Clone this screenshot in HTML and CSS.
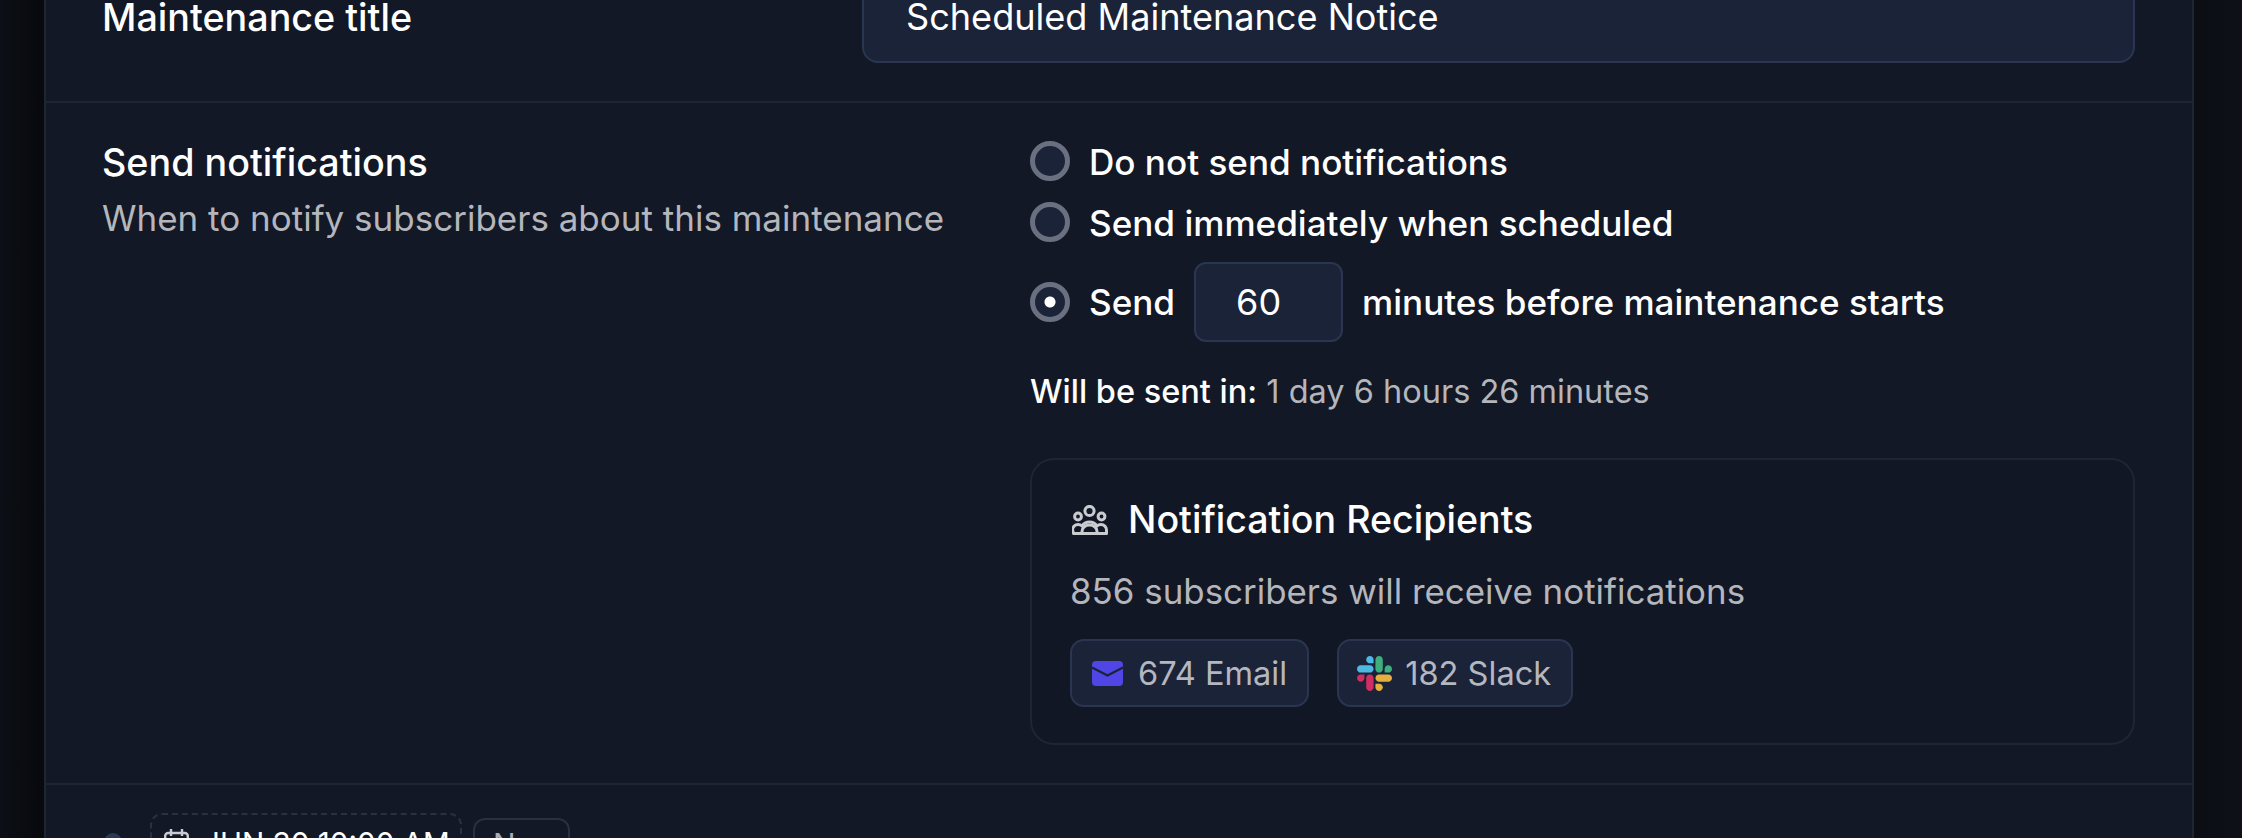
FILE: index.html
```html
<!DOCTYPE html>
<html lang="en">
<head>
  <meta charset="UTF-8" />
  <meta name="viewport" content="width=device-width, initial-scale=1.0"/>
  <title>Scheduled Maintenance</title>
  <link rel="stylesheet" href="styles.css">
</head>
<body>
  <div class="panel">

    <!-- Title row, scrolled partly out of view -->
    <section class="row row-title">
      <label class="row-label" for="title">Maintenance title</label>
      <input class="text-input" id="title" type="text" value="Scheduled Maintenance Notice">
    </section>

    <!-- Notifications row -->
    <section class="row row-notify">
      <div class="notify-intro">
        <h3 class="row-label">Send notifications</h3>
        <p class="row-help">When to notify subscribers about this maintenance</p>
      </div>
      <div>
        <div class="radio-line"><span class="radio"></span>Do not send notifications</div>
        <div class="radio-line"><span class="radio"></span>Send immediately when scheduled</div>
        <div class="radio-line radio-line-input">
          <span class="radio radio-on"></span>Send
          <input class="minutes" type="text" value="60">
          minutes before maintenance starts
        </div>
        <p class="sent-in"><strong>Will be sent in:</strong> 1 day 6 hours 26 minutes</p>

        <div class="recipients">
          <div class="recipients-head">
            <svg class="icon-users" viewBox="0 0 36 30" fill="none" stroke="#c9cbd0" stroke-width="3" stroke-linejoin="round">
              <circle cx="17.500" cy="6" r="4.600"/>
              <circle cx="6" cy="11.500" r="3.400"/>
              <circle cx="29.500" cy="11.500" r="3.400"/>
              <path d="M1.500 28.500h33v-3.500c0-3-2.500-5.500-5.500-5.500-1.500 0-3 .5-4 1.500-1.500-2.500-4.500-4-7.500-4s-6 1.500-7.500 4c-1-1-2.500-1.500-4-1.500-3 0-5.500 2.500-5.500 5.500z"/>
              <path d="M10 28.500v-2c0-4 3.500-6.500 7.500-6.500s7.500 2.500 7.500 6.500v2"/>
            </svg>
            <h4>Notification Recipients</h4>
          </div>
          <p class="recipients-count">856 subscribers will receive notifications</p>
          <div class="chips">
            <span class="chip">
              <svg class="icon-mail" viewBox="0 0 31 25">
                <rect width="31" height="25" rx="4" fill="#4f46e5"/>
                <path d="M0 6.500l15.500 8 15.500-8" fill="none" stroke="#1b2339" stroke-width="2.200"/>
              </svg>
              674 Email
            </span>
            <span class="chip">
              <svg class="icon-slack" viewBox="0 0 122.800 122.800">
                <path d="M25.800 77.600c0 7.100-5.800 12.900-12.900 12.900S0 84.700 0 77.600s5.800-12.900 12.900-12.900h12.900v12.900z" fill="#cf2f60"/>
                <path d="M32.300 77.600c0-7.100 5.800-12.900 12.900-12.900s12.900 5.800 12.900 12.900v32.300c0 7.100-5.800 12.900-12.900 12.900s-12.900-5.800-12.900-12.900V77.600z" fill="#cf2f60"/>
                <path d="M45.200 25.800c-7.100 0-12.900-5.800-12.900-12.900S38.100 0 45.200 0s12.900 5.800 12.900 12.900v12.900H45.200z" fill="#4db9e3"/>
                <path d="M45.200 32.300c7.100 0 12.900 5.800 12.900 12.900s-5.800 12.900-12.900 12.900H12.900C5.800 58.100 0 52.300 0 45.200s5.800-12.900 12.900-12.900h32.300z" fill="#4db9e3"/>
                <path d="M97 45.200c0-7.100 5.800-12.900 12.900-12.900s12.900 5.800 12.900 12.900-5.800 12.900-12.900 12.900H97V45.200z" fill="#3fae7d"/>
                <path d="M90.500 45.200c0 7.100-5.800 12.900-12.900 12.900s-12.900-5.800-12.900-12.900V12.900C64.700 5.800 70.500 0 77.600 0s12.900 5.800 12.900 12.900v32.300z" fill="#3fae7d"/>
                <path d="M77.600 97c7.100 0 12.900 5.800 12.900 12.900s-5.800 12.900-12.900 12.900-12.900-5.800-12.900-12.900V97h12.900z" fill="#e5b03f"/>
                <path d="M77.600 90.500c-7.100 0-12.900-5.800-12.900-12.900s5.800-12.900 12.900-12.900h32.300c7.100 0 12.900 5.800 12.900 12.900s-5.800 12.900-12.900 12.900H77.600z" fill="#e5b03f"/>
              </svg>
              182 Slack
            </span>
          </div>
        </div>
      </div>
    </section>

    <!-- Next row, cut off by the bottom of the window -->
    <section class="row-update">
      <span class="update-dot"></span>
      <span class="date-box">
        <svg class="icon-calendar" viewBox="0 0 25 28" fill="none" stroke="#c9cbd0" stroke-width="2.400">
          <rect x="1.200" y="4" width="22.600" height="22" rx="3"/>
          <path d="M7 0v7M18 0v7M1.200 11h22.600"/>
        </svg>
        JUN 30 10:00 AM
      </span>
      <span class="new-pill">New</span>
    </section>

  </div>
</body>
</html>
```

FILE: styles.css
```css
* {
  box-sizing: border-box;
}

html, body {
  height: 838px;
  overflow: hidden;
}

body {
  margin: 0;
  font-family: 'Inter', sans-serif;
  font-size: 32px;
  color: #fff;
  background: linear-gradient(90deg, #0c0f15 0, #08090d 44px, #0c0e14 2194px, #0d1018 100%);
}

.panel {
  margin: -18px 48px 0 44px;
  background-color: #121826;
  border-left: 2px solid #1e2533;
  border-right: 2px solid #1e2533;
}

.row {
  display: grid;
  padding: 0 57px 0 56px;
  border-bottom: 2px solid #1e2533;
}

.row-title {
  grid-template-columns: 760px 1fr;
  height: 121px;
}

.row-notify {
  grid-template-columns: 928px 1fr;
  height: 682px;
  padding-top: 37px;
}

.notify-intro {
  margin-top: -2px;
}

.row-label {
  margin: 0;
  font-size: 37.700px;
  font-weight: 500;
  line-height: 48px;
}

.row-title .row-label {
  margin-top: 11px;
}

.row-help {
  margin: 8px 0 0;
  font-size: 35px;
  line-height: 48px;
  color: #b4b6bc;
}

.text-input {
  height: 81px;
  padding: 0 42px 12px;
  font: 36.100px 'Inter', sans-serif;
  color: #fff;
  background-color: #1b2339;
  border: 2px solid #2a3650;
  border-radius: 16px;
}

.radio-line {
  display: flex;
  align-items: center;
  height: 42px;
  margin-bottom: 19px;
  padding-top: 2px;
  font-size: 35.100px;
  font-weight: 500;
}

.radio-line-input {
  height: 80px;
  margin-top: 19px;
  margin-bottom: 0;
  padding-top: 0;
}

.radio {
  flex: none;
  width: 40px;
  height: 40px;
  margin-top: -2px;
  margin-right: 19px;
  background-color: #1b2339;
  border: 5px solid #6b7080;
  border-radius: 50%;
}

.radio-on {
  margin-top: 0;
  background: radial-gradient(circle, #fff 5px, #1b2339 6px);
}

.minutes {
  width: 149px;
  height: 80px;
  margin: 0 19px;
  padding: 0 40px;
  font: 36px 'Inter', sans-serif;
  color: #fff;
  background-color: #1b2339;
  border: 2px solid #2a3650;
  border-radius: 12px;
}

.sent-in {
  margin: 30px 0 0;
  font-size: 32.500px;
  line-height: 40px;
  color: #b4b6bc;
}

.sent-in strong {
  font-weight: 500;
  color: #fff;
}

.recipients {
  height: 287px;
  margin-top: 46px;
  padding: 36px 38px 0;
  background-color: #111725;
  border: 2px solid #1e2533;
  border-radius: 24px;
}

.recipients-head {
  display: flex;
  align-items: center;
  gap: 20px;
}

.recipients-head h4 {
  margin: 0;
  font-size: 37.600px;
  font-weight: 500;
  line-height: 48px;
}

.icon-users {
  width: 36px;
  height: 30px;
  margin-left: 2px;
}

.recipients-count {
  margin: 23px 0 0;
  font-size: 34.900px;
  line-height: 48px;
  color: #b4b6bc;
}

.chips {
  display: flex;
  gap: 28px;
  margin-top: 24px;
}

.chip {
  display: flex;
  align-items: center;
  height: 68px;
  padding: 0 20px 0 18px;
  font-size: 32.600px;
  color: #b4b7bf;
  background-color: #1b2339;
  border: 2px solid #2a3650;
  border-radius: 14px;
}

.icon-mail {
  width: 31px;
  height: 25px;
  margin: 0 15px 0 2px;
}

.icon-slack {
  width: 35px;
  height: 35px;
  margin-right: 13px;
}

.row-update {
  display: flex;
  align-items: flex-start;
  height: 100px;
  padding: 28px 0 0 58px;
}

.update-dot {
  width: 18px;
  height: 18px;
  margin-top: 20px;
  margin-right: 28px;
  background-color: #2a3a56;
  border-radius: 50%;
}

.date-box {
  display: flex;
  align-items: center;
  gap: 14px;
  width: 312px;
  height: 60px;
  padding: 0 12px;
  font-size: 29.600px;
  white-space: nowrap;
  border: 2px dashed #2a3040;
  border-radius: 12px;
}

.icon-calendar {
  flex: none;
  width: 25px;
  height: 28px;
}

.new-pill {
  width: 97px;
  height: 50px;
  margin: 5px 0 0 11px;
  padding: 6px 18px;
  font-size: 30px;
  color: #a9acb4;
  border: 2px solid #2a3040;
  border-radius: 12px;
}
```
